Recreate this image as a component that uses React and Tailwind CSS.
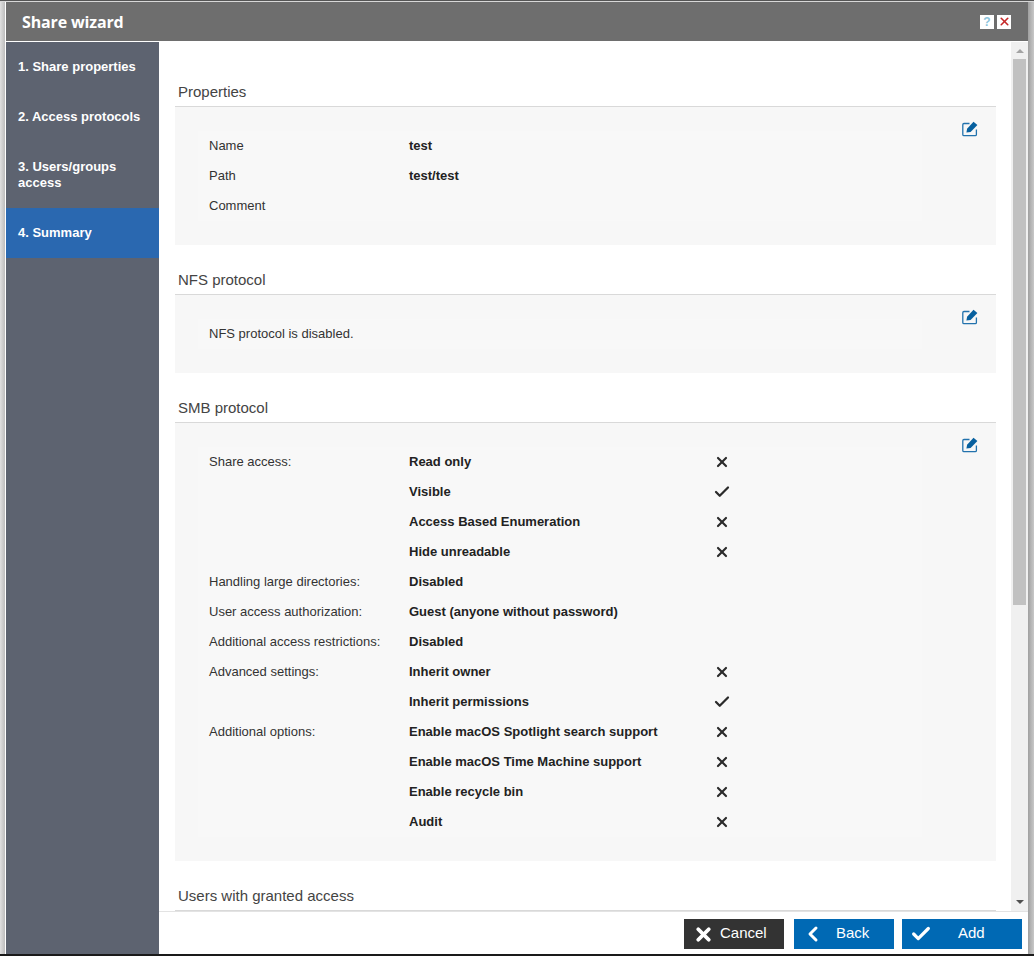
import { Check, ChevronLeft, X } from "lucide-react";

const steps = [
  { label: "1. Share properties" },
  { label: "2. Access protocols" },
  { label: "3. Users/groups access" },
  { label: "4. Summary", active: true },
];

const smbRows = [
  { label: "Share access:", value: "Read only", state: "off" },
  { value: "Visible", state: "on" },
  { value: "Access Based Enumeration", state: "off" },
  { value: "Hide unreadable", state: "off" },
  { label: "Handling large directories:", value: "Disabled" },
  { label: "User access authorization:", value: "Guest (anyone without password)" },
  { label: "Additional access restrictions:", value: "Disabled" },
  { label: "Advanced settings:", value: "Inherit owner", state: "off" },
  { value: "Inherit permissions", state: "on" },
  { label: "Additional options:", value: "Enable macOS Spotlight search support", state: "off" },
  { value: "Enable macOS Time Machine support", state: "off" },
  { value: "Enable recycle bin", state: "off" },
  { value: "Audit", state: "off" },
];

const EditIcon = () => (
  <svg width="16" height="16" viewBox="0 0 16 16" className="absolute left-[787px] top-[14px]" fill="none">
    <path d="M7.5 2.5H2C1.3 2.5.8 3 .8 3.7v9.8c0 .7.5 1.2 1.2 1.2h11.2c.7 0 1.2-.5 1.2-1.2V8.5" stroke="#2272ad" strokeWidth="1.3" />
    <path d="M4.4 11.6l.7-3.8L11.5.8l3.9 3.3-6.8 6.9z" fill="#07609f" />
  </svg>
);

const Row = ({ label, value, state }) => (
  <div className="flex h-[30px] items-center">
    <div className="w-[211px] pl-[11px] text-[#333]">{label}</div>
    <div className="w-[300px] font-bold text-[#222]">{value}</div>
    {state === "off" && <X size={16} strokeWidth={3.2} className="ml-[5px] text-[#2b2b2b]" />}
    {state === "on" && <Check size={18} strokeWidth={3} className="ml-[4px] text-[#2b2b2b]" />}
  </div>
);

const Section = ({ title, children }) => (
  <section>
    <h2 className="flex h-[50px] items-end border-b border-[#d9d9d9] pb-[5px] pl-[3px] text-[15px] leading-[18px] text-[#444]">
      {title}
    </h2>
    <div className="relative bg-[#f7f7f7] py-[24px] pl-[23px]">
      <EditIcon />
      <div className="w-[724px] bg-[#f8f8f8]">{children}</div>
    </div>
  </section>
);

const FooterButton = ({ icon, label, className }) => (
  <button className={`flex h-[30px] items-center text-[15px] text-white ${className}`}>
    {icon}
    <span className="pb-[2px]">{label}</span>
  </button>
);

export default function App() {
  return (
    <div className="flex h-[956px] w-[1034px] flex-col overflow-hidden bg-[#c9c9c9] font-['Liberation_Sans',Arial,sans-serif] text-[13px]">
      <div className="h-px shrink-0 bg-[#555]" />
      <div className="h-px shrink-0 bg-[#d8d8d8]" />
      <div className="flex min-h-0 flex-1">
        <div className="w-[5px] bg-gradient-to-r from-[#e0e0e0] to-[#bdbdbd]" />
        <div className="flex w-[1023px] flex-col border-l border-white bg-white">
          {/* Title bar */}
          <div className="flex h-[39px] shrink-0 items-center justify-between bg-[#6e6e6e] pl-[16px] pr-[17px]">
            <span className="font-['Open_Sans',sans-serif] text-[16px] font-bold tracking-[-0.15px] text-white">
              Share wizard
            </span>
            <div className="flex gap-[3px]">
              <span className="flex size-[14px] items-center justify-center bg-white text-[12px] font-bold leading-none text-[#8cc4dc]">?</span>
              <span className="flex size-[14px] items-center justify-center bg-white">
                <X size={13} strokeWidth={3} className="text-[#c62828]" />
              </span>
            </div>
          </div>

          <div className="flex min-h-0 flex-1 border-t border-white">
            {/* Steps */}
            <nav className="w-[153px] shrink-0 bg-[#5d6370] font-bold leading-4 text-white">
              {steps.map((step) => (
                <div key={step.label} className={`py-[17px] pl-[12px] pr-[8px] ${step.active ? "bg-[#2a68b0]" : ""}`}>
                  {step.label}
                </div>
              ))}
            </nav>

            <div className="flex min-w-0 flex-1 flex-col">
              <div className="flex h-[869px] shrink-0">
                {/* Summary */}
                <div className="w-[852px] overflow-hidden pl-[16px] pr-[15px] pt-[15px]">
                  <Section title="Properties">
                    <Row label="Name" value="test" />
                    <Row label="Path" value="test/test" />
                    <Row label="Comment" />
                  </Section>
                  <Section title="NFS protocol">
                    <div className="flex h-[30px] items-center pl-[11px] text-[#333]">NFS protocol is disabled.</div>
                  </Section>
                  <Section title="SMB protocol">
                    {smbRows.map((row) => (
                      <Row key={row.value} {...row} />
                    ))}
                  </Section>
                  <h2 className="flex h-[50px] items-end border-b border-[#d9d9d9] pb-[5px] pl-[3px] text-[15px] leading-[18px] text-[#444]">
                    Users with granted access
                  </h2>
                </div>
                {/* Scrollbar */}
                <div className="flex w-[17px] flex-col items-center bg-[#f0f0f0]">
                  <div className="flex h-[17px] items-center">
                    <div className="border-x-[4px] border-b-[4px] border-x-transparent border-b-[#a3a3a3]" />
                  </div>
                  <div className="h-[546px] w-[13px] bg-[#c1c1c1]" />
                  <div className="mt-auto flex h-[18px] items-center">
                    <div className="border-x-[4px] border-t-[4px] border-x-transparent border-t-[#505050]" />
                  </div>
                </div>
              </div>

              {/* Footer */}
              <div className="flex flex-1 items-start justify-end border-t border-[#e3e3e3] pr-[6px] pt-[7px]">
                <FooterButton
                  className="mr-[10px] w-[100px] bg-[#333] pl-[9px]"
                  icon={<X size={21} strokeWidth={4.4} className="mr-[6px]" />}
                  label="Cancel"
                />
                <FooterButton
                  className="mr-[8px] w-[100px] bg-[#0069b4] pl-[7px]"
                  icon={<ChevronLeft size={24} strokeWidth={3} className="mr-[11px]" />}
                  label="Back"
                />
                <FooterButton
                  className="w-[120px] bg-[#0069b4] pl-[8px]"
                  icon={<Check size={22} strokeWidth={3.5} className="mr-[26px]" />}
                  label="Add"
                />
              </div>
            </div>
          </div>
        </div>
        <div className="w-[6px] bg-gradient-to-r from-[#a0a0a0] to-[#c8c8c8]" />
      </div>
      <div className="h-[2px] shrink-0 bg-[#1a1a1a]" />
    </div>
  );
}
